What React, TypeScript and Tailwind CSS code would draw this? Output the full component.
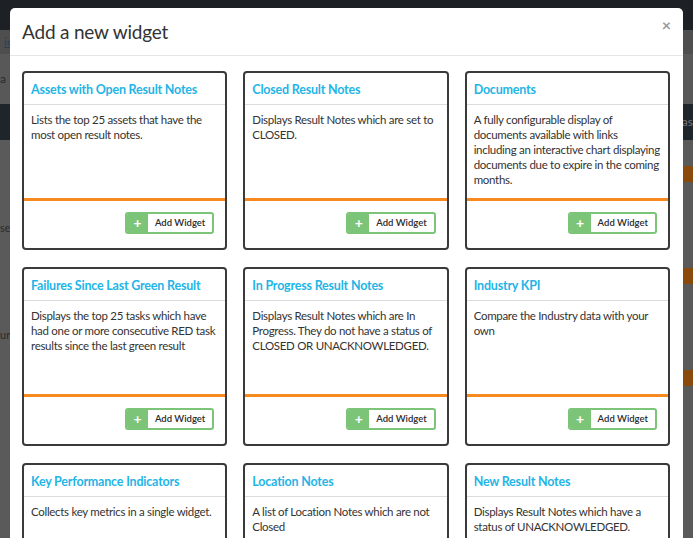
import React from 'react'

type Widget = {
  title: string
  lines: string[]
}

const widgets: Widget[] = [
  { title: 'Assets with Open Result Notes', lines: ['Lists the top 25 assets that have the', 'most open result notes.'] },
  { title: 'Closed Result Notes', lines: ['Displays Result Notes which are set to', 'CLOSED.'] },
  {
    title: 'Documents',
    lines: [
      'A fully configurable display of',
      'documents available with links',
      'including an interactive chart displaying',
      'documents due to expire in the coming',
      'months.',
    ],
  },
  {
    title: 'Failures Since Last Green Result',
    lines: ['Displays the top 25 tasks which have', 'had one or more consecutive RED task', 'results since the last green result'],
  },
  {
    title: 'In Progress Result Notes',
    lines: ['Displays Result Notes which are In', 'Progress. They do not have a status of', 'CLOSED OR UNACKNOWLEDGED.'],
  },
  { title: 'Industry KPI', lines: ['Compare the Industry data with your', 'own'] },
  { title: 'Key Performance Indicators', lines: ['Collects key metrics in a single widget.'] },
  { title: 'Location Notes', lines: ['A list of Location Notes which are not', 'Closed'] },
  { title: 'New Result Notes', lines: ['Displays Result Notes which have a', 'status of UNACKNOWLEDGED.'] },
]

const font = { fontFamily: 'Lato, "Liberation Sans", sans-serif' }

function WidgetCard({ widget }: { widget: Widget }) {
  return (
    <div className="flex h-[179px] flex-col rounded-[4px] border-2 border-[#3a3a3a] bg-white">
      <div className="flex h-[32px] shrink-0 items-center border-b border-[#dcdcdc] px-[7px] pt-[3px]">
        <h3 className="text-[12.5px] font-bold tracking-[-0.2px] text-[#1fb5e6]">{widget.title}</h3>
      </div>
      <div className="flex-1 pl-[7px] pt-[7px] text-[11.5px] leading-[15px] tracking-[-0.3px] text-[#333]">
        {widget.lines.map((line) => (
          <p key={line} className="whitespace-nowrap">
            {line}
          </p>
        ))}
      </div>
      <div className="h-[3px] shrink-0 bg-[#f7891f]" />
      <div className="flex h-[47px] shrink-0 items-start justify-end pr-[11px] pt-[11px]">
        <button className="flex h-[22px] items-stretch overflow-hidden rounded-[3px] border-2 border-[#7cc578] bg-white">
          <span className="flex w-[21px] items-center justify-center bg-[#7cc578] text-[14px] font-bold leading-none text-white">
            +
          </span>
          <span className="flex items-center px-[7px] text-[9.5px] font-semibold text-[#2b2b2b]">Add Widget</span>
        </button>
      </div>
    </div>
  )
}

function BackgroundPage() {
  return (
    <div className="flex h-full flex-col" style={font}>
      <div className="h-[30px] shrink-0 bg-[#1d2125]" />
      <div className="flex h-[24px] shrink-0 items-center bg-[#4e4e4e] px-1 text-[12px] text-[#2a3f55] underline">
        ier
      </div>
      <div className="flex h-[50px] shrink-0 items-center bg-[#585858] px-0 text-[12px] text-[#2a2a2a]">a N</div>
      <div className="flex h-[36px] shrink-0 items-center justify-end bg-[#1f262b] text-[12px] text-[#777]">as</div>
      <div className="flex flex-1 bg-[#5a5a5a]">
        <div className="flex w-[686px] flex-col gap-[90px] pt-[80px] text-[11px] text-[#2a2a2a]">
          <span>ser</span>
          <span>urc</span>
        </div>
        <div className="flex flex-col pt-[26px] text-[10px] text-[#2e2e2e]">
          {['ffe', '005', 'a M'].map((_, i) => (
            <div key={i} className="mb-[14px] flex flex-col gap-[9px]">
              <div className="flex h-[16px] w-[30px] items-center bg-[#8a4a0c] px-[2px] text-[13px] text-[#c9a27a]">0</div>
              <span>ffe</span>
              <span>005</span>
              <span>a M</span>
            </div>
          ))}
        </div>
      </div>
    </div>
  )
}

export default function App() {
  return (
    <div className="relative h-[538px] w-[693px] overflow-hidden">
      <BackgroundPage />
      <div className="absolute left-[10px] top-[8px] h-[560px] w-[673px] rounded-[5px] bg-white" style={font}>
        <div className="flex h-[48px] items-start justify-between border-b border-[#e5e5e5] pl-[12px] pr-[12px]">
          <h2 className="mt-[10px] text-[19px] font-normal tracking-[-0.2px] text-[#333]">Add a new widget</h2>
          <button className="mt-[9px] text-[16px] font-bold leading-none text-[#999]">×</button>
        </div>
        <div className="grid grid-cols-3 gap-x-[16px] gap-y-[17px] pl-[12px] pr-[13px] pt-[15px]">
          {widgets.map((w) => (
            <WidgetCard key={w.title} widget={w} />
          ))}
        </div>
      </div>
    </div>
  )
}
